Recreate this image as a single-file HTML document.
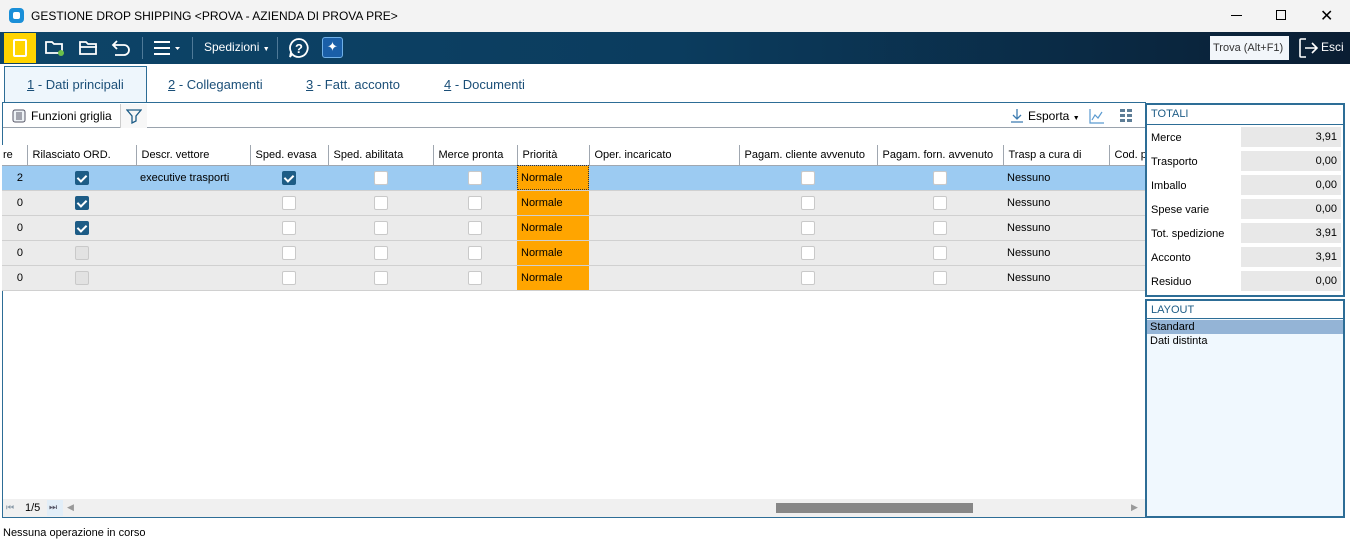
<!DOCTYPE html>
<html><head><meta charset="utf-8"><style>
*{margin:0;padding:0;box-sizing:border-box}
body{width:1350px;height:542px;overflow:hidden;background:#fff;font-family:"Liberation Sans",Arial,sans-serif;font-size:12px;color:#000;position:relative}
.abs{position:absolute}
#title{left:0;top:0;width:1350px;height:32px;background:#f3f3f3}
#tb{left:0;top:32px;width:1350px;height:32px;background:linear-gradient(90deg,#0d4468 0%,#0b3c5e 50%,#0a1e33 100%)}
.sep{position:absolute;top:5px;width:1px;height:22px;background:#4f7a98}
#tabs{left:0;top:64px;width:1350px;height:38px;background:#fff}
.tab{position:absolute;top:77px;font-size:13px;color:#1b4f78}
.tab u{text-decoration:underline}
table{border-collapse:collapse;table-layout:fixed;position:absolute;left:0;top:145px;width:1171px}
td{height:25px;border-bottom:1px solid #d0d0d0;font-size:11px;padding:0 4px;white-space:nowrap;overflow:hidden}
th{height:20px;font-weight:normal;font-size:11px;text-align:left;padding:0 5px;border-right:1px solid #a0a7b0;border-bottom:1px solid #a0a7b0;white-space:nowrap;overflow:hidden;background:#fff}
tr.g td{background:#ebebeb}
tr.s td{background:#9ccbf2}
td.o{background:#ffa500!important}
.c{text-align:center}
.cb{display:inline-block;width:14px;height:14px;border:1px solid #c9c9c9;border-radius:2px;background:#fff;vertical-align:middle}
.cb.d{background:#e2e2e2}
.cb.k{background:#1d5c86;border-color:#1d5c86;position:relative}
.cb.k:after{content:"";position:absolute;left:3px;top:1px;width:4px;height:7px;border:solid #fff;border-width:0 2px 2px 0;transform:rotate(45deg)}
.lab{position:absolute;left:1151px;font-size:11px}
.val{position:absolute;left:1241px;width:100px;height:20px;background:#e8e8e8;text-align:right;padding-right:4px;line-height:20px;font-size:11px}
</style></head><body>
<div id="title" class="abs">
 <div class="abs" style="left:9px;top:8px;width:15px;height:15px;background:#1a8fd8;border-radius:4px"><div class="abs" style="left:4px;top:4px;width:7px;height:7px;background:#fff;border-radius:2px"></div></div>
 <div class="abs" style="left:31px;top:9px;font-size:12px">GESTIONE DROP SHIPPING &lt;PROVA - AZIENDA DI PROVA PRE&gt;</div>
 <div class="abs" style="left:1231px;top:15px;width:11px;height:1px;background:#000"></div>
 <div class="abs" style="left:1276px;top:10px;width:10px;height:10px;border:1px solid #000"></div>
 <div class="abs" style="left:1320px;top:6px;font-size:16px">✕</div>
</div>
<div id="tb" class="abs">
 <div class="abs" style="left:4px;top:1px;width:32px;height:30px;background:#ffd400"><div class="abs" style="left:9px;top:6px;width:14px;height:18px;border:2px solid #fff;border-radius:2px"></div></div>
 <svg class="abs" style="left:44px;top:6px" width="24" height="20" fill="none" stroke="#fff" stroke-width="1.8"><path d="M2 4h6l2 2h8v9H2z"/><circle cx="17" cy="15" r="3" fill="#6cc04a" stroke="none"/></svg>
 <svg class="abs" style="left:78px;top:6px" width="22" height="20" fill="none" stroke="#fff" stroke-width="1.8"><path d="M2 4h6l2 2h8v10H2z"/><path d="M2 9h17"/></svg>
 <svg class="abs" style="left:111px;top:6px" width="22" height="20" fill="none" stroke="#fff" stroke-width="1.8"><path d="M6 3L2 7l4 4M2 7h11a5 5 0 0 1 0 10H4"/></svg>
 <div class="sep" style="left:142px"></div>
 <svg class="abs" style="left:154px;top:8px" width="28" height="16" fill="#fff"><rect x="0" y="1" width="16" height="2"/><rect x="0" y="7" width="16" height="2"/><rect x="0" y="13" width="16" height="2"/><path d="M21 7h5l-2.5 3z"/></svg>
 <div class="sep" style="left:192px"></div>
 <div class="abs" style="left:204px;top:8px;color:#fff;font-size:12px">Spedizioni <span style="font-size:7px">▼</span></div>
 <div class="sep" style="left:277px"></div>
 <svg class="abs" style="left:288px;top:5px" width="22" height="22" fill="none" stroke="#fff" stroke-width="1.8"><path d="M11 2a9 9 0 1 1-7 15l-2 3 1-5A9 9 0 0 1 11 2z"/><text x="7" y="16" fill="#fff" stroke="none" font-size="13" font-family="Liberation Sans" font-weight="bold">?</text></svg>
 <div class="abs" style="left:322px;top:5px;width:21px;height:21px;background:#1a5fa8;border:1.5px solid #6fb0e8;border-radius:3px;color:#fff;text-align:center;font-size:13px;line-height:18px">✦</div>
 <div class="abs" style="left:1210px;top:4px;width:79px;height:24px;background:#f2f6fa;font-size:11px;line-height:24px;padding-left:3px;color:#333">Trova (Alt+F1)</div>
 <svg class="abs" style="left:1298px;top:5px" width="22" height="22" fill="none" stroke="#fff" stroke-width="1.6"><path d="M8 2H3a1 1 0 0 0-1 1v16a1 1 0 0 0 1 1h5"/><path d="M7 11h12M14 6l5 5-5 5"/></svg>
 <div class="abs" style="left:1321px;top:8px;color:#fff;font-size:12px">Esci</div>
</div>
<div id="tabs" class="abs"></div>
<div class="abs" style="left:4px;top:66px;width:143px;height:37px;background:#eef6fc;border:1px solid #2d6d96;border-bottom:none"></div>
<div class="tab" style="left:27px"><u>1</u> - Dati principali</div>
<div class="tab" style="left:168px"><u>2</u> - Collegamenti</div>
<div class="tab" style="left:306px"><u>3</u> - Fatt. acconto</div>
<div class="tab" style="left:444px"><u>4</u> - Documenti</div>
<div class="abs" style="left:2px;top:102px;width:1144px;height:416px;border:1px solid #2d6d96;border-right:none;overflow:hidden">
 <div class="abs" style="left:0;top:0;width:1142px;height:25px;border-bottom:1px solid #9aa3ad;background:#fff"></div>
 <svg class="abs" style="left:9px;top:6px" width="14" height="14" fill="none" stroke="#556" stroke-width="1"><rect x="1" y="1" width="12" height="12" rx="2" fill="#eef2f6"/><path d="M4 4h6M4 6h6M4 8h6M4 10h6"/></svg>
 <div class="abs" style="left:28px;top:6px;font-size:12px">Funzioni griglia</div>
 <div class="abs" style="left:117px;top:1px;width:27px;height:24px;border-left:1px solid #ccc;background:#f7f7f7"></div>
 <svg class="abs" style="left:123px;top:5px" width="16" height="16" fill="none" stroke="#1d5c86" stroke-width="1.3"><path d="M1 2h14l-5 6v5l-4 2V8z"/></svg>
 <svg class="abs" style="left:1006px;top:5px" width="16" height="16" fill="none" stroke="#3c7bb0" stroke-width="1.3"><path d="M8 1v10M4 7l4 4 4-4M2 14h12"/></svg>
 <div class="abs" style="left:1025px;top:6px;font-size:12px">Esporta <span style="font-size:7px">▼</span></div>
 <svg class="abs" style="left:1086px;top:5px" width="16" height="16" fill="none" stroke="#5a9ad0" stroke-width="1.2"><path d="M1 1v14h14M3 12l3-5 3 3 4-6"/></svg>
 <svg class="abs" style="left:1117px;top:6px" width="13" height="13" fill="#5d7d96"><rect x="0" y="0" width="5" height="3"/><rect x="7" y="0" width="5" height="3"/><rect x="0" y="5" width="5" height="3"/><rect x="7" y="5" width="5" height="3"/><rect x="0" y="10" width="5" height="3"/><rect x="7" y="10" width="5" height="3"/></svg>
 <div class="abs" style="left:0;top:396px;width:1142px;height:18px;background:#f0f0f0"></div>
 <div class="abs" style="left:3px;top:399px;font-size:9px;color:#8a9aa8">⏮</div>
 <div class="abs" style="left:22px;top:399px;font-size:11px">1/5</div>
 <div class="abs" style="left:44px;top:397px;width:16px;height:16px;background:#e2eef8"></div>
 <div class="abs" style="left:46px;top:399px;font-size:9px;color:#556">⏭</div>
 <div class="abs" style="left:64px;top:399px;font-size:9px;color:#999">◀</div>
 <div class="abs" style="left:773px;top:400px;width:197px;height:10px;background:#878787"></div>
 <div class="abs" style="left:1128px;top:399px;font-size:9px;color:#999">▶</div>
</div>
<div class="abs" style="left:2px;top:145px;width:1143px;height:353px;overflow:hidden">
<table style="left:-4px;top:0">
<colgroup><col style="width:29px"><col style="width:109px"><col style="width:114px"><col style="width:78px"><col style="width:105px"><col style="width:84px"><col style="width:72px"><col style="width:150px"><col style="width:138px"><col style="width:126px"><col style="width:106px"><col style="width:60px"></colgroup>
<tr><th>re</th><th>Rilasciato ORD.</th><th>Descr. vettore</th><th>Sped. evasa</th><th>Sped. abilitata</th><th>Merce pronta</th><th>Priorità</th><th>Oper. incaricato</th><th>Pagam. cliente avvenuto</th><th>Pagam. forn. avvenuto</th><th>Trasp a cura di</th><th>Cod. p</th></tr>
<tr class="s"><td style="text-align:right">2</td><td class="c"><span class="cb k"></span></td><td>executive trasporti</td><td class="c"><span class="cb k"></span></td><td class="c"><span class="cb"></span></td><td class="c"><span class="cb"></span></td><td class="o" style="outline:1px dotted #333;outline-offset:-1px">Normale</td><td></td><td class="c"><span class="cb"></span></td><td class="c"><span class="cb"></span></td><td>Nessuno</td><td></td></tr>
<tr class="g"><td style="text-align:right">0</td><td class="c"><span class="cb k"></span></td><td></td><td class="c"><span class="cb"></span></td><td class="c"><span class="cb"></span></td><td class="c"><span class="cb"></span></td><td class="o">Normale</td><td></td><td class="c"><span class="cb"></span></td><td class="c"><span class="cb"></span></td><td>Nessuno</td><td></td></tr>
<tr class="g"><td style="text-align:right">0</td><td class="c"><span class="cb k"></span></td><td></td><td class="c"><span class="cb"></span></td><td class="c"><span class="cb"></span></td><td class="c"><span class="cb"></span></td><td class="o">Normale</td><td></td><td class="c"><span class="cb"></span></td><td class="c"><span class="cb"></span></td><td>Nessuno</td><td></td></tr>
<tr class="g"><td style="text-align:right">0</td><td class="c"><span class="cb d"></span></td><td></td><td class="c"><span class="cb"></span></td><td class="c"><span class="cb"></span></td><td class="c"><span class="cb"></span></td><td class="o">Normale</td><td></td><td class="c"><span class="cb"></span></td><td class="c"><span class="cb"></span></td><td>Nessuno</td><td></td></tr>
<tr class="g"><td style="text-align:right">0</td><td class="c"><span class="cb d"></span></td><td></td><td class="c"><span class="cb"></span></td><td class="c"><span class="cb"></span></td><td class="c"><span class="cb"></span></td><td class="o">Normale</td><td></td><td class="c"><span class="cb"></span></td><td class="c"><span class="cb"></span></td><td>Nessuno</td><td></td></tr>
</table>
</div>
<div class="abs" style="left:1145px;top:103px;width:200px;height:194px;border:2px solid #2d6d96;background:#fff"></div>
<div class="abs" style="left:1147px;top:105px;width:196px;height:20px;border-bottom:1px solid #2d6d96"></div>
<div class="abs" style="left:1151px;top:108px;font-size:11px;color:#1d5c86">TOTALI</div>
<div class="lab" style="top:132px">Merce</div><div class="val" style="top:127px">3,91</div>
<div class="lab" style="top:156px">Trasporto</div><div class="val" style="top:151px">0,00</div>
<div class="lab" style="top:180px">Imballo</div><div class="val" style="top:175px">0,00</div>
<div class="lab" style="top:204px">Spese varie</div><div class="val" style="top:199px">0,00</div>
<div class="lab" style="top:228px">Tot. spedizione</div><div class="val" style="top:223px">3,91</div>
<div class="lab" style="top:252px">Acconto</div><div class="val" style="top:247px">3,91</div>
<div class="lab" style="top:276px">Residuo</div><div class="val" style="top:271px">0,00</div>
<div class="abs" style="left:1145px;top:299px;width:200px;height:219px;border:2px solid #2d6d96;background:#f0f8fe"></div>
<div class="abs" style="left:1147px;top:301px;width:196px;height:18px;background:#fff;border-bottom:1px solid #2d6d96"></div>
<div class="abs" style="left:1151px;top:304px;font-size:11px;color:#1d5c86">LAYOUT</div>
<div class="abs" style="left:1147px;top:320px;width:196px;height:14px;background:#94b4d6"></div>
<div class="abs" style="left:1150px;top:321px;font-size:11px">Standard</div>
<div class="abs" style="left:1150px;top:335px;font-size:11px">Dati distinta</div>
<div class="abs" style="left:3px;top:527px;font-size:11px">Nessuna operazione in corso</div>
</body></html>
